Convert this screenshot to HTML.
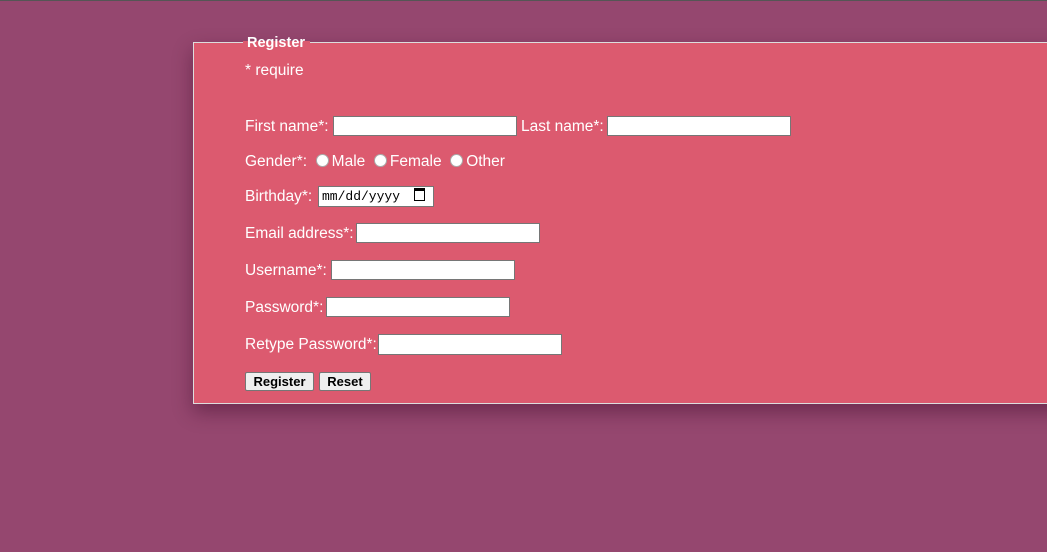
<!DOCTYPE html>
<html><head><style>
html,body{margin:0;padding:0;}
body{width:1047px;height:552px;background:#95476f;position:relative;overflow:hidden;font-family:"Liberation Sans",sans-serif;font-size:15.5px;color:#fff;}
.topl{position:absolute;left:0;top:0;width:1047px;height:1px;background:#555}
.fs{position:absolute;left:193px;top:42px;width:870px;height:360px;background:#dc5a6f;border:1px solid #ddd;box-shadow:0 8px 18px rgba(60,10,40,.45)}
.lgb{position:absolute;left:243px;top:41px;width:67px;height:4px;background:#dc5a6f}
.lg{position:absolute;left:247px;top:35px;font-weight:bold;font-size:14.5px;line-height:17px}
.t{position:absolute;left:245px;white-space:nowrap;line-height:18px;margin-top:1px}
.in{position:absolute;height:20px;background:#fff;border:1px solid #767676;box-sizing:border-box}
.rd{display:inline-block;width:13px;height:13px;border-radius:50%;background:#fff;border:1px solid #aaa;box-sizing:border-box;vertical-align:-1px;margin:0 3px 0 0}
.btn{position:absolute;top:372px;height:19px;background:#efefef;border:1px solid #767676;border-radius:2px;color:#000;font-size:13px;font-weight:bold;line-height:17px;text-align:center;box-sizing:border-box}
</style></head><body>
<div class="topl"></div>
<div class="fs"></div>
<div class="lgb"></div>
<div class="lg">Register</div>
<div class="t" style="top:61px">* require</div>
<div class="t" style="top:117px">First name*:</div>
<div class="in" style="left:333px;top:116px;width:184px"></div>
<div class="t" style="left:521px;top:117px">Last name*:</div>
<div class="in" style="left:607px;top:116px;width:184px"></div>
<div class="t" style="top:152px">Gender*: &nbsp;<span class="rd"></span>Male &nbsp;<span class="rd"></span>Female &nbsp;<span class="rd"></span>Other</div>
<div class="t" style="top:187px">Birthday*:</div>
<div class="in" style="left:318px;top:186px;width:116px;height:21px;color:#000;font-family:'Liberation Mono',monospace;font-size:13px;line-height:19px;padding-left:3px">mm/dd/yyyy <span style="display:inline-block;width:9px;height:9px;border:1.5px solid #000;border-top-width:3px;margin-left:6px;vertical-align:-1px"></span></div>
<div class="t" style="top:224px">Email address*:</div>
<div class="in" style="left:356px;top:223px;width:184px"></div>
<div class="t" style="top:261px">Username*:</div>
<div class="in" style="left:331px;top:260px;width:184px"></div>
<div class="t" style="top:298px">Password*:</div>
<div class="in" style="left:326px;top:297px;width:184px"></div>
<div class="t" style="top:335px">Retype Password*:</div>
<div class="in" style="left:378px;top:334px;width:184px;height:21px"></div>
<div class="btn" style="left:245px;width:69px">Register</div>
<div class="btn" style="left:319px;width:52px">Reset</div>
</body></html>
